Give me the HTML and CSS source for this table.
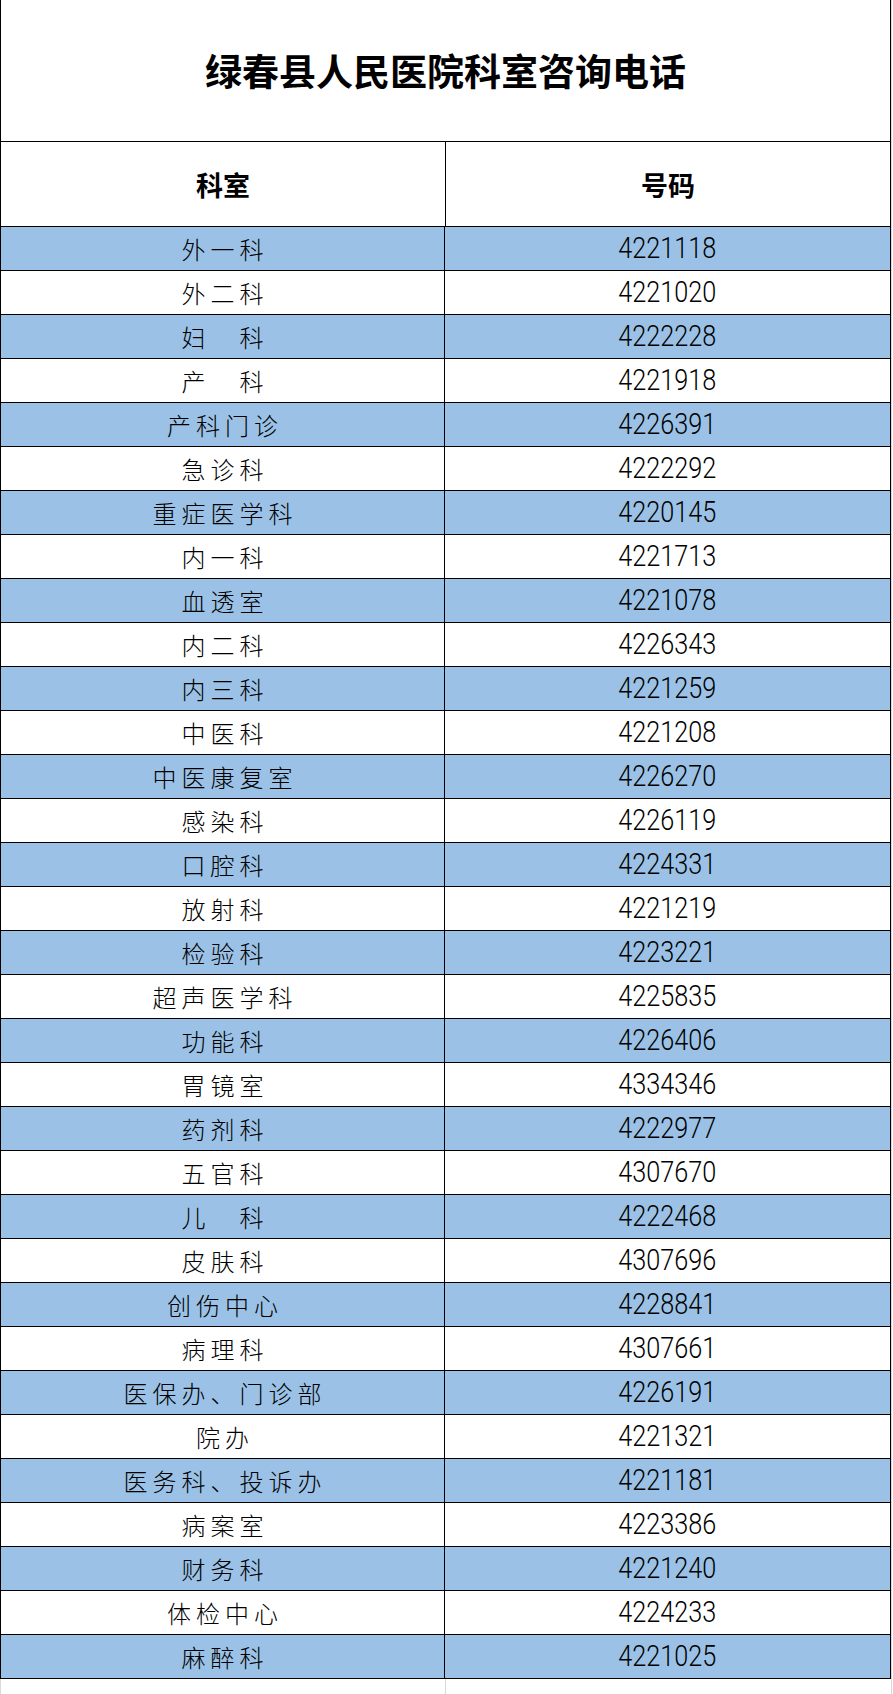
FILE: index.html
```html
<!DOCTYPE html>
<html lang="zh-CN">
<head>
<meta charset="utf-8">
<title>绿春县人民医院科室咨询电话</title>
<link rel="stylesheet" href="styles.css">
</head>
<body>
<div class="page">
  <div class="sheet">
    <div class="title">绿春县人民医院科室咨询电话</div>
    <div class="row head">
      <div class="cell">科室</div>
      <div class="cell">号码</div>
    </div>
    <div class="row blue"><div class="cell dept">外一科</div><div class="cell num"><span>4221118</span></div></div>
    <div class="row"><div class="cell dept">外二科</div><div class="cell num"><span>4221020</span></div></div>
    <div class="row blue"><div class="cell dept">妇　科</div><div class="cell num"><span>4222228</span></div></div>
    <div class="row"><div class="cell dept">产　科</div><div class="cell num"><span>4221918</span></div></div>
    <div class="row blue"><div class="cell dept">产科门诊</div><div class="cell num"><span>4226391</span></div></div>
    <div class="row"><div class="cell dept">急诊科</div><div class="cell num"><span>4222292</span></div></div>
    <div class="row blue"><div class="cell dept">重症医学科</div><div class="cell num"><span>4220145</span></div></div>
    <div class="row"><div class="cell dept">内一科</div><div class="cell num"><span>4221713</span></div></div>
    <div class="row blue"><div class="cell dept">血透室</div><div class="cell num"><span>4221078</span></div></div>
    <div class="row"><div class="cell dept">内二科</div><div class="cell num"><span>4226343</span></div></div>
    <div class="row blue"><div class="cell dept">内三科</div><div class="cell num"><span>4221259</span></div></div>
    <div class="row"><div class="cell dept">中医科</div><div class="cell num"><span>4221208</span></div></div>
    <div class="row blue"><div class="cell dept">中医康复室</div><div class="cell num"><span>4226270</span></div></div>
    <div class="row"><div class="cell dept">感染科</div><div class="cell num"><span>4226119</span></div></div>
    <div class="row blue"><div class="cell dept">口腔科</div><div class="cell num"><span>4224331</span></div></div>
    <div class="row"><div class="cell dept">放射科</div><div class="cell num"><span>4221219</span></div></div>
    <div class="row blue"><div class="cell dept">检验科</div><div class="cell num"><span>4223221</span></div></div>
    <div class="row"><div class="cell dept">超声医学科</div><div class="cell num"><span>4225835</span></div></div>
    <div class="row blue"><div class="cell dept">功能科</div><div class="cell num"><span>4226406</span></div></div>
    <div class="row"><div class="cell dept">胃镜室</div><div class="cell num"><span>4334346</span></div></div>
    <div class="row blue"><div class="cell dept">药剂科</div><div class="cell num"><span>4222977</span></div></div>
    <div class="row"><div class="cell dept">五官科</div><div class="cell num"><span>4307670</span></div></div>
    <div class="row blue"><div class="cell dept">儿　科</div><div class="cell num"><span>4222468</span></div></div>
    <div class="row"><div class="cell dept">皮肤科</div><div class="cell num"><span>4307696</span></div></div>
    <div class="row blue"><div class="cell dept">创伤中心</div><div class="cell num"><span>4228841</span></div></div>
    <div class="row"><div class="cell dept">病理科</div><div class="cell num"><span>4307661</span></div></div>
    <div class="row blue"><div class="cell dept">医保办、门诊部</div><div class="cell num"><span>4226191</span></div></div>
    <div class="row"><div class="cell dept">院办</div><div class="cell num"><span>4221321</span></div></div>
    <div class="row blue"><div class="cell dept">医务科、投诉办</div><div class="cell num"><span>4221181</span></div></div>
    <div class="row"><div class="cell dept">病案室</div><div class="cell num"><span>4223386</span></div></div>
    <div class="row blue"><div class="cell dept">财务科</div><div class="cell num"><span>4221240</span></div></div>
    <div class="row"><div class="cell dept">体检中心</div><div class="cell num"><span>4224233</span></div></div>
    <div class="row blue"><div class="cell dept">麻醉科</div><div class="cell num"><span>4221025</span></div></div>
  </div>
  <div class="grid-below">
    <div class="gcell"></div>
    <div class="gcell"></div>
  </div>
</div>
</body>
</html>
```

FILE: styles.css
```css
html, body {
  margin: 0;
  padding: 0;
  background: #ffffff;
}

body {
  font-family: "Noto Sans CJK SC", "Noto Sans", sans-serif;
  color: #000000;
}

.page {
  width: 891px;
  border-right: 1px solid #d9d9d9;
}

.sheet {
  width: 889px;
  border-left: 1px solid #000;
  border-right: 1px solid #000;
}

.title {
  height: 141px;
  border-bottom: 1px solid #000;
  display: flex;
  align-items: center;
  justify-content: center;
  font-size: 37px;
  font-weight: 700;
  line-height: 1;
}

.row {
  display: flex;
  height: 43px;
  border-bottom: 1px solid #000;
  background: #ffffff;
}

.row.blue {
  background: #9bc2e6;
}

.row.head {
  height: 84px;
  font-size: 27px;
  font-weight: 700;
}

.cell {
  width: 444px;
  display: flex;
  align-items: center;
  justify-content: center;
  line-height: 1;
}

.cell:first-child {
  border-right: 1px solid #000;
}

.dept {
  font-size: 24px;
  font-weight: 300;
  letter-spacing: 5px;
  padding-left: 5px;
  box-sizing: border-box;
}

.num {
  font-family: "Roboto", "Liberation Sans", sans-serif;
  font-weight: 300;
  font-size: 29px;
}

.num span {
  display: inline-block;
  transform: scaleX(0.87);
}

.grid-below {
  display: flex;
  height: 15px;
  border-left: 1px solid #d9d9d9;
}

.gcell {
  width: 444px;
}

.gcell:first-child {
  border-right: 1px solid #d9d9d9;
}
```
